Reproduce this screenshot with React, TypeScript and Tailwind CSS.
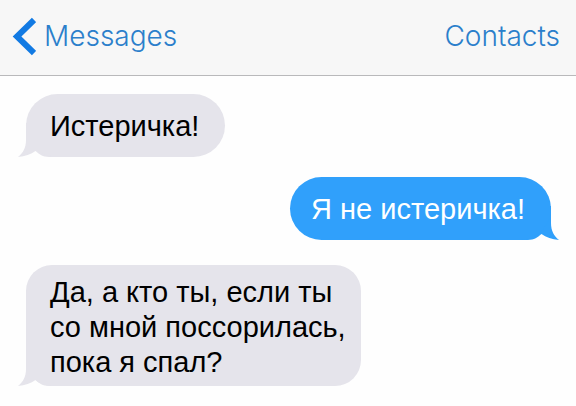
import React from "react";

type Message = { side: "in" | "out"; text: string; spacing: string; shape: string };

const messages: Message[] = [
  { side: "in", text: "Истеричка!", spacing: "", shape: "rounded-[32px] pt-[15px] pb-[13px] pl-6 pr-[26px]" },
  { side: "out", text: "Я не истеричка!", spacing: "mt-5", shape: "rounded-[32px] pt-[15px] pb-[13px] pl-[21px] pr-[26px]" },
  {
    side: "in",
    text: "Да, а кто ты, если ты\nсо мной поссорилась,\nпока я спал?",
    spacing: "mt-[25px]",
    shape: "rounded-[26px] pt-2.5 pb-1.5 pl-6 pr-[15px]",
  },
];

function Tail({ side }: { side: Message["side"] }) {
  return (
    <svg
      aria-hidden="true"
      viewBox="0 0 40 34"
      className={
        side === "in"
          ? "absolute -left-2 bottom-0 h-[34px] w-10 text-[#e5e4eb]"
          : "absolute -right-2 bottom-0 h-[34px] w-10 -scale-x-100 text-[#30a0fb]"
      }
    >
      <path
        fill="currentColor"
        d="M8 0V17C8 25 5 30 0 34C7 33.5 13 31 17.500 28C21 31 25 34 31 34H40V0Z"
      />
    </svg>
  );
}

function Bubble({ message }: { message: Message }) {
  const incoming = message.side === "in";
  return (
    <li className={`flex ${incoming ? "justify-start" : "justify-end"} ${message.spacing}`}>
      <div className="relative">
        <Tail side={message.side} />
        <p
          className={`relative whitespace-pre-line text-[29px] leading-[35px] ${message.shape} ${
            incoming ? "bg-[#e5e4eb] text-black" : "bg-[#30a0fb] text-white"
          }`}
        >
          {message.text}
        </p>
      </div>
    </li>
  );
}

export default function App() {
  return (
    <div className="min-h-screen bg-[#fefefe] font-['Liberation_Sans',Arial,sans-serif]">
      <header className="flex h-[76px] items-center justify-between border-b border-[#b9b9bb] bg-[#f7f7f7] pr-4 pb-1 pl-3 font-['Inter','Liberation_Sans',sans-serif] text-[28px] font-light text-[#2b7fcb]">
        <button type="button" className="flex items-center gap-2">
          <svg aria-hidden="true" viewBox="0 0 24 40" className="h-10 w-6">
            <path d="M22 4L5 20.500L22 37" fill="none" stroke="#127ae3" strokeWidth="6" />
          </svg>
          Messages
        </button>
        <button type="button">Contacts</button>
      </header>
      <main className="pt-[18px] pr-[25px] pb-4 pl-[26px]">
        <ul>
          {messages.map((message) => (
            <Bubble key={message.text} message={message} />
          ))}
        </ul>
      </main>
    </div>
  );
}
